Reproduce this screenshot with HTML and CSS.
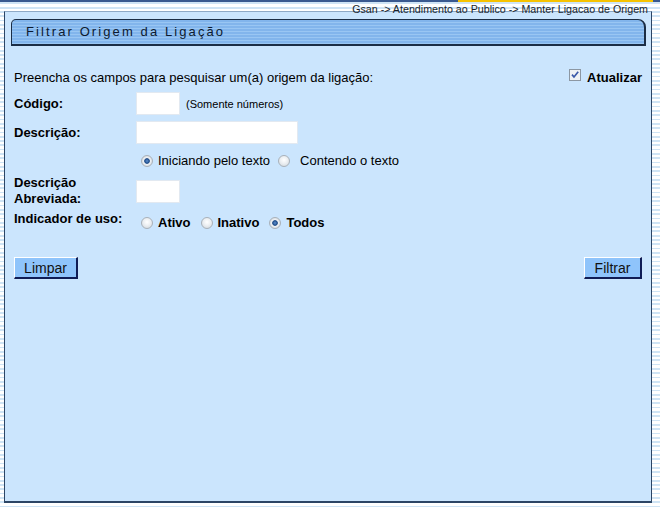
FILE: index.html
```
<!DOCTYPE html>
<html>
<head>
<meta charset="utf-8"/>
<title>Filtrar Origem da Ligação</title>
<link rel="stylesheet" href="styles.css">
</head>
<body>
    <div class="topbar">
        <span class="trail">Gsan -&gt; Atendimento ao Publico -&gt; Manter Ligacao de Origem</span>
    </div>

    <div class="panel">
        <div class="title">Filtrar Origem da Ligação</div>

        <form class="form">
            <div class="intro">
                <span>Preencha os campos para pesquisar um(a) origem da ligação:</span>
                <label class="update">
                    <span class="check"><svg width="12" height="12" viewBox="0 0 12 12"><rect x="0.5" y="0.5" width="11" height="11" fill="#eef1f4" stroke="#8c97a3"/><path d="M3 5.6 L5 8 L9.2 2.8" fill="none" stroke="#3a58a8" stroke-width="1.7"/></svg></span>
                    Atualizar
                </label>
            </div>

            <div class="row r-code">
                <label class="lbl">Código:</label>
                <input type="text" class="txt short">
                <span class="hint">(Somente números)</span>
            </div>

            <div class="row r-desc">
                <label class="lbl">Descrição:</label>
                <input type="text" class="txt long">
            </div>

            <div class="row r-match">
                <span class="lbl"></span>
                <input type="radio" name="tipo" class="first" checked><span class="opt">Iniciando pelo texto</span>
                <input type="radio" name="tipo" class="wide"><span class="opt">Contendo o texto</span>
            </div>

            <div class="row r-abrev">
                <label class="lbl">Descrição<br>Abreviada:</label>
                <input type="text" class="txt short">
            </div>

            <div class="row r-uso">
                <label class="lbl">Indicador de uso:</label>
                <div class="choices">
                    <input type="radio" name="uso" class="first"><b>Ativo</b>
                    <input type="radio" name="uso"><b>Inativo</b>
                    <input type="radio" name="uso" checked><b>Todos</b>
                </div>
            </div>

            <div class="buttons">
                <input type="button" class="btn clear" value="Limpar">
                <input type="button" class="btn go" value="Filtrar">
            </div>
        </form>
    </div>
</body>
</html>
```

FILE: styles.css
```
html {
    height: 100%;
    background: repeating-linear-gradient(to bottom, #ffffff 0 2.5px, #cfe4f5 2.5px 4.3px);
}
body {
    margin: 0;
    font-family: "Liberation Sans", Arial, sans-serif;
    color: #000;
}

.topbar {
    height: 11px;
    text-align: right;
    padding-right: 12px;
    background-image: linear-gradient(to right, #39598f 0 458px, #f6c200 458px 653px, #39598f 653px);
    background-repeat: no-repeat;
    background-size: 100% 2px;
}
.trail {
    font-size: 10.7px;
    line-height: 12px;
    color: #1a1f2c;
    position: relative;
    top: -1px;
}

.panel {
    box-sizing: border-box;
    width: 648px;
    height: 492px;
    margin-left: 4px;
    background: #cbe5fd;
    border: 1px solid #2c4565;
    border-top-color: #8ea9c6;
    border-bottom-width: 2px;
}

.title {
    box-sizing: border-box;
    height: 27px;
    margin: 7px 5px 0 6px;
    padding-left: 14px;
    border: 1px solid #1b2d45;
    border-bottom-width: 2px;
    border-right-width: 2px;
    border-radius: 5px 8px 0 0;
    background: repeating-linear-gradient(to bottom, #82b5ec 0 2px, #99c6f3 2px 3px);
    font-size: 13px;
    letter-spacing: 2.1px;
    line-height: 24px;
    color: #0c1a30;
}

.form {
    padding: 0 9px 0 9px;
    font-size: 13px;
}

.intro {
    display: flex;
    justify-content: space-between;
    align-items: center;
    height: 17px;
    margin-top: 23px;
}
.update {
    display: flex;
    align-items: center;
    font-weight: bold;
}
.check {
    display: inline-block;
    width: 12px;
    height: 12px;
    margin: 0 6px 6px 0;
}
.check svg { display: block; }

.row {
    display: flex;
    align-items: center;
}
.lbl {
    width: 122px;
    flex: none;
    font-weight: bold;
    line-height: 16px;
}
.r-code { margin-top: 6px; }
.r-desc { margin-top: 6px; }
.r-match { margin-top: 9px; height: 16px; }
.r-abrev { margin-top: 6px; height: 32px; }
.r-uso { margin-top: 4px; align-items: flex-start; }

.txt {
    box-sizing: border-box;
    height: 23px;
    margin: 0;
    border: 1px solid #e2e9f1;
    background: #fff;
    font: 13px "Liberation Sans", Arial, sans-serif;
}
.short { width: 44px; }
.long { width: 162px; }
.hint {
    font-size: 11px;
    margin-left: 6px;
}

input[type=radio] {
    appearance: none;
    -webkit-appearance: none;
    box-sizing: border-box;
    width: 12px;
    height: 12px;
    margin: 0 5px 0 10px;
    border-radius: 50%;
    border: 1px solid #a9b1b9;
    background: radial-gradient(circle at 50% 40%, #ffffff 0, #eceff2 45%, #cfd5db 100%);
}
input[type=radio]:checked {
    background: radial-gradient(circle at 50% 50%, #5d8fd0 0, #1d4a86 2.4px, #f4f6f8 3.2px, #e4e8ec 4px, #cdd3d9 100%);
}
input[type=radio].first { margin-left: 5px; }
input[type=radio].wide { margin-left: 8px; margin-right: 10px; }

.opt { line-height: 16px; }

.choices {
    display: flex;
    align-items: center;
    margin-top: 4px;
    line-height: 16px;
}

.buttons {
    display: flex;
    justify-content: space-between;
    margin-top: 26px;
}
.btn {
    box-sizing: border-box;
    height: 22px;
    padding: 0;
    background: #8fc4fb;
    border: 1px solid #ffffff;
    border-right: 2px solid #0f1c55;
    border-bottom: 2px solid #0f1c55;
    border-radius: 0;
    font: 14px "Liberation Sans", Arial, sans-serif;
    color: #111;
}
.clear { width: 64px; }
.go { width: 58px; }
```
